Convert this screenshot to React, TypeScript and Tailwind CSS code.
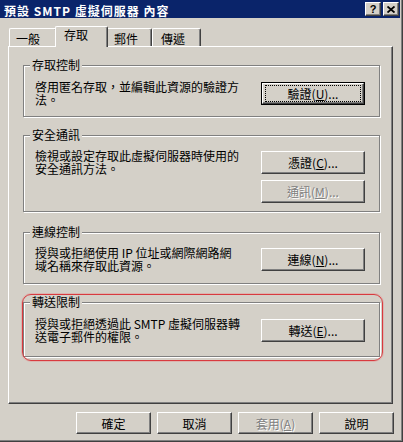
import React from "react";

const FONT = "font-['Noto_Sans_CJK_TC','Noto_Sans_CJK_JP',sans-serif]";
const FACE =
  "bg-[#d4d0c8] border border-t-white border-l-white border-r-[#404040] border-b-[#404040] shadow-[inset_-1px_-1px_0_#808080]";

function Btn({
  children,
  className = "",
  disabled = false,
  isDefault = false,
}: {
  children: React.ReactNode;
  className?: string;
  disabled?: boolean;
  isDefault?: boolean;
}) {
  const text = disabled ? "text-[#808080] [text-shadow:1px_1px_0_#fff]" : "text-black";
  if (isDefault) {
    return (
      <div className={`flex border border-black ${className}`}>
        <div className={`${FACE} flex flex-1 px-[2px] py-[1px]`}>
          <div className={`flex flex-1 items-center justify-center border border-dotted border-black ${text}`}>
            {children}
          </div>
        </div>
      </div>
    );
  }
  return (
    <div className={`${FACE} flex items-center justify-center ${text} ${className}`}>{children}</div>
  );
}

function Tab({ label, selected = false, w, pl }: { label: string; selected?: boolean; w: string; pl: string }) {
  if (selected) {
    return (
      <div
        className={`relative z-10 -mx-[2px] -mb-[1px] h-[21px] ${w} ${pl} pt-[1px] bg-[#d4d0c8] border-t border-l border-r border-t-white border-l-white border-r-[#404040] shadow-[inset_-1px_0_0_#808080] rounded-t-[2px]`}
      >
        {label}
      </div>
    );
  }
  return (
    <div
      className={`h-[18px] ${w} ${pl} pt-[3px] bg-[#d4d0c8] border-t border-l border-r border-t-white border-l-white border-r-[#404040] shadow-[inset_-1px_0_0_#808080] rounded-t-[2px]`}
    >
      {label}
    </div>
  );
}

function Group({
  title,
  className = "",
  children,
}: {
  title: string;
  className?: string;
  children: React.ReactNode;
}) {
  return (
    <div
      className={`relative ml-[14px] w-[357px] border border-[#808080] shadow-[inset_1px_1px_0_#fff,1px_1px_0_#fff] ${className}`}
    >
      <span className="absolute left-[6px] -top-[8px] px-[2px] bg-[#d4d0c8] leading-[13px]">{title}</span>
      {children}
    </div>
  );
}

function U({ c }: { c: string }) {
  return <span className="underline underline-offset-[1px]">{c}</span>;
}

export default function App() {
  return (
    <div
      className={`w-[403px] h-[442px] overflow-hidden bg-[#d4d0c8] ${FONT} text-[12px] leading-[13px] text-black border-r border-b border-r-[#404040] border-b-[#404040] shadow-[inset_-1px_-1px_0_#808080]`}
    >
      <div className="flex flex-col">
        {/* Title bar */}
        <div className="flex h-[18px] w-[400px] items-center bg-[#0a246a] pl-[4px] pr-[1px]">
          <span className="flex-1 pt-[2px] text-[12px] font-bold tracking-[1px] text-white">
            預設 SMTP 虛擬伺服器 內容
          </span>
          <div className="flex gap-[2px]">
            <div className={`${FACE} flex h-[14px] w-[16px] items-center justify-center text-[11px] font-bold leading-[11px] font-['Liberation_Sans',sans-serif]`}>
              ?
            </div>
            <div className={`${FACE} flex h-[14px] w-[16px] items-center justify-center`}>
              <svg width="8" height="7" viewBox="0 0 8 7">
                <path d="M0.5 0.5 L7.5 6.5 M7.5 0.5 L0.5 6.5" stroke="#000" strokeWidth="1.8" />
              </svg>
            </div>
          </div>
        </div>

        {/* Tabs */}
        <div className="mt-[8px] flex h-[20px] items-end pl-[9px]">
          <Tab label="一般" w="w-[48px]" pl="pl-[6px]" />
          <Tab label="存取" selected w="w-[53px]" pl="pl-[8px]" />
          <Tab label="郵件" w="w-[46px]" pl="pl-[7px]" />
          <Tab label="傳遞" w="w-[49px]" pl="pl-[8px]" />
        </div>

        {/* Tab panel */}
        <div className="ml-[8px] flex h-[358px] w-[385px] flex-col border border-t-white border-l-white border-r-[#404040] border-b-[#404040] shadow-[inset_-1px_-1px_0_#808080]">
          <Group title="存取控制" className="mt-[18px]">
            <div className="flex items-center justify-between pl-[11px] pr-[14px] pt-[14px] pb-[10px]">
              <div>
                啓用匿名存取，並編輯此資源的驗證方
                <br />
                法。
              </div>
              <Btn isDefault className="h-[23px] w-[104px]">
                驗證(<U c="U" />)...
              </Btn>
            </div>
          </Group>

          <Group title="安全通訊" className="mt-[18px]">
            <div className="flex flex-col pl-[11px] pr-[14px] pt-[13px] pb-[8px]">
              <div className="flex items-center justify-between">
                <div>
                  檢視或設定存取此虛擬伺服器時使用的
                  <br />
                  安全通訊方法。
                </div>
                <Btn className="h-[23px] w-[104px]">
                  憑證(<U c="C" />)...
                </Btn>
              </div>
              <div className="mt-[5px] flex justify-end">
                <Btn disabled className="h-[23px] w-[104px]">
                  通訊(<U c="M" />)...
                </Btn>
              </div>
            </div>
          </Group>

          <Group title="連線控制" className="mt-[20px]">
            <div className="flex items-center justify-between pl-[11px] pr-[14px] pt-[13px] pb-[11px]">
              <div>
                授與或拒絕使用 IP 位址或網際網路網
                <br />
                域名稱來存取此資源。
              </div>
              <Btn className="h-[23px] w-[104px]">
                連線(<U c="N" />)...
              </Btn>
            </div>
          </Group>

          <Group title="轉送限制" className="mt-[18px]">
            <div className="pointer-events-none absolute -left-[2px] -top-[9px] h-[67px] w-[361px] rounded-[9px] border border-[#d83a3f] shadow-[0_0_0_1px_rgba(235,130,130,0.35)]" />
            <div className="flex items-center justify-between pl-[11px] pr-[14px] pt-[14px] pb-[13px]">
              <div>
                授與或拒絕透過此 SMTP 虛擬伺服器轉
                <br />
                送電子郵件的權限。
              </div>
              <Btn className="h-[23px] w-[104px]">
                轉送(<U c="E" />)...
              </Btn>
            </div>
          </Group>
        </div>

        {/* Bottom buttons */}
        <div className="ml-[76px] mt-[8px] flex gap-[6px]">
          <Btn className="h-[22px] w-[75px]">確定</Btn>
          <Btn className="h-[22px] w-[75px]">取消</Btn>
          <Btn disabled className="h-[22px] w-[75px]">
            套用(<U c="A" />)
          </Btn>
          <Btn className="h-[22px] w-[75px]">說明</Btn>
        </div>
      </div>
    </div>
  );
}
